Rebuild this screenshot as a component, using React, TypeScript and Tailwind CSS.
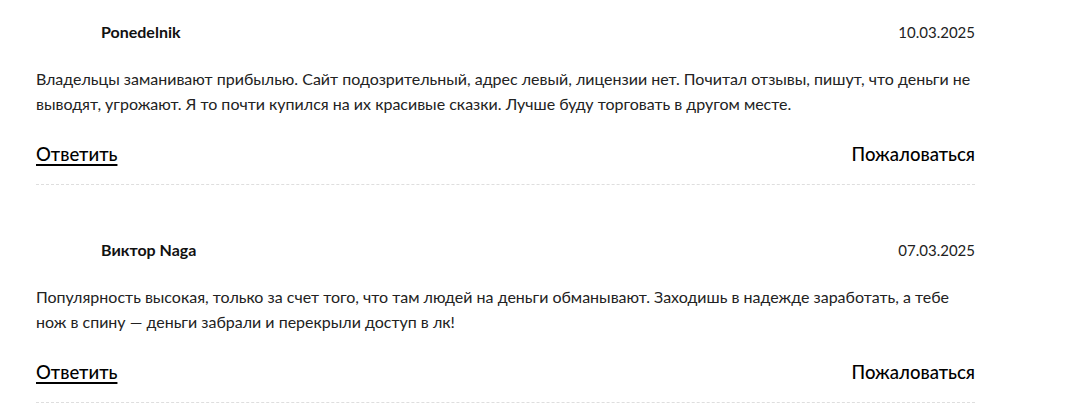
import React from "react";

const reviews = [
  {
    name: "Ponedelnik",
    date: "10.03.2025",
    text: "Владельцы заманивают прибылью. Сайт подозрительный, адрес левый, лицензии нет. Почитал отзывы, пишут, что деньги не выводят, угрожают. Я то почти купился на их красивые сказки. Лучше буду торговать в другом месте.",
  },
  {
    name: "Виктор Naga",
    date: "07.03.2025",
    text: "Популярность высокая, только за счет того, что там людей на деньги обманывают. Заходишь в надежде заработать, а тебе нож в спину — деньги забрали и перекрыли доступ в лк!",
  },
];

export default function App() {
  return (
    <div
      className="min-h-[406px] bg-white text-[#222]"
      style={{ fontFamily: "Lato, 'Noto Sans', sans-serif" }}
    >
      <div className="ml-[36px] w-[939px]">
        {reviews.map((r, i) => (
          <div
            key={i}
            className={`pt-[20px] pb-[15px] border-b border-dashed border-[#dedede] ${i > 0 ? "mt-[33px]" : ""}`}
          >
            <div className="flex h-[24px] items-center justify-between">
              <span className="pl-[65px] text-[16px] font-bold text-[#111]">{r.name}</span>
              <span className="text-[15px] text-[#222]">{r.date}</span>
            </div>
            <p className="mt-[22px] text-[16px] leading-[25px] text-[#222]">{r.text}</p>
            <div className="mt-[25px] flex h-[28px] items-center justify-between text-[18.5px] font-medium text-black">
              <a className="underline decoration-[1.5px] underline-offset-[3px] cursor-pointer">Ответить</a>
              <a className="cursor-pointer">Пожаловаться</a>
            </div>
          </div>
        ))}
      </div>
    </div>
  );
}
